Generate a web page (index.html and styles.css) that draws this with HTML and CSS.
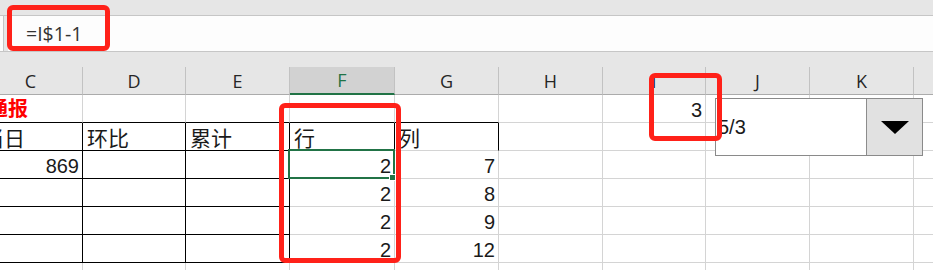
FILE: index.html
```html
<!DOCTYPE html>
<html lang="zh-CN">
<head>
  <meta charset="UTF-8">
  <title>Sheet</title>
  <link rel="stylesheet" href="styles.css">
</head>
<body>
  <div class="ribbon-edge"></div>

  <div class="formula-bar">
    <div class="name-box"></div>
    <div class="formula-input">=I$1-1</div>
  </div>

  <div class="sheet" id="sheet">
    <div class="selection"><span class="fill-handle"></span></div>
  </div>

  <div class="combo">
    <div class="combo-text"><span>5/3</span></div>
    <div class="combo-btn"><span class="arrow"></span></div>
  </div>

  <div class="mark mark-formula"></div>
  <div class="mark mark-cell"></div>
  <div class="mark mark-column"></div>

  <script>
    const cols = ['C', 'D', 'E', 'F', 'G', 'H', 'I', 'J', 'K', 'L'];

    // row number -> { column: [text, class] }
    const data = {
      1: { C: ['通报', 'zh title'], I: ['3', 'num'] },
      2: { C: ['当日', 'zh'], D: ['环比', 'zh'], E: ['累计', 'zh'], F: ['行', 'zh'], G: ['列', 'zh'] },
      3: { C: ['869', 'num'], F: ['2', 'num'], G: ['7', 'num'] },
      4: { F: ['2', 'num'], G: ['8', 'num'] },
      5: { F: ['2', 'num'], G: ['9', 'num'] },
      6: { F: ['2', 'num'], G: ['12', 'num'] },
      7: {}
    };

    const sheet = document.getElementById('sheet');
    const selection = sheet.querySelector('.selection');

    function blackRight(r, c) {
      if (r >= 2 && r <= 6 && ['C', 'D', 'E'].includes(c)) return true;
      if (r === 2 && ['F', 'G'].includes(c)) return true;
      return false;
    }

    function blackBottom(r, c) {
      if (r === 1 && ['C', 'D', 'E', 'F', 'G'].includes(c)) return true;
      if (r >= 2 && r <= 6 && ['C', 'D', 'E'].includes(c)) return true;
      return false;
    }

    cols.forEach(c => {
      const head = document.createElement('div');
      head.className = 'col-head' + (c === 'F' ? ' active' : '');
      head.textContent = c === 'L' ? '' : c;
      sheet.insertBefore(head, selection);
    });

    Object.keys(data).forEach(key => {
      const r = Number(key);
      cols.forEach(c => {
        const cell = document.createElement('div');
        const entry = data[r][c];
        cell.className = 'cell';
        if (entry) {
          cell.className += ' ' + entry[1];
          const span = document.createElement('span');
          span.textContent = entry[0];
          cell.appendChild(span);
        }
        if (blackRight(r, c)) cell.classList.add('br');
        if (blackBottom(r, c)) cell.classList.add('bb');
        sheet.insertBefore(cell, selection);
      });
    });
  </script>
</body>
</html>
```

FILE: styles.css
```css
* {
  box-sizing: border-box;
}
body {
  margin: 0;
  width: 933px;
  height: 270px;
  overflow: hidden;
  position: relative;
  background: #e6e6e6;
  font-family: "Liberation Sans", "Noto Sans CJK SC", sans-serif;
  color: #1a1a1a;
}

.ribbon-edge {
  height: 15px;
}
.formula-bar {
  display: flex;
  height: 37px;
  border-top: 1px solid #c6c6c6;
  border-bottom: 1px solid #c6c6c6;
  background: #e6e6e6;
}
.name-box {
  width: 4px;
  background: #fdfdfd;
  border-right: 1px solid #c6c6c6;
}
.formula-input {
  flex: 1;
  margin-left: 4px;
  padding-left: 18px;
  background: #fdfdfd;
  font-family: "Open Sans", sans-serif;
  font-size: 19.5px;
  line-height: 35px;
  color: #333;
}

.sheet {
  position: relative;
  margin-top: 15px;
  margin-left: -21px;
  width: 954px;
  overflow: hidden;
  display: grid;
  grid-template-columns: 104px 103px 104px 105px 104px 104px 103px 104px 104px 104px;
  grid-auto-rows: 28px;
  background: #fff;
}
.col-head {
  display: flex;
  align-items: center;
  justify-content: center;
  background: #e6e6e6;
  border-right: 1px solid #c2c2c2;
  border-bottom: 1px solid #ababab;
  font-family: "Open Sans", sans-serif;
  font-size: 18px;
  color: #262626;
}
.col-head.active {
  background: #d2d2d2;
  color: #217346;
  border-bottom: 2px solid #217346;
}

.cell {
  display: flex;
  align-items: flex-end;
  padding: 0 3px;
  border-right: 1px solid #d4d4d4;
  border-bottom: 1px solid #d4d4d4;
  font-size: 20px;
  line-height: 22px;
  white-space: nowrap;
  background: #fff;
}
.cell.num {
  justify-content: flex-end;
  padding-bottom: 1px;
}
.cell.zh {
  font-family: "Noto Sans CJK SC", sans-serif;
  font-size: 21px;
  padding-left: 4px;
  padding-bottom: 2px;
}
.cell.title {
  color: #ff0000;
  font-weight: bold;
  font-size: 20px;
  padding-left: 9px;
  padding-bottom: 3px;
}
.cell.br {
  border-right-color: #000;
}
.cell.bb {
  border-bottom-color: #000;
}

.selection {
  position: absolute;
  left: 309px;
  top: 82px;
  width: 107px;
  height: 30px;
  border: 2px solid #217346;
}
.fill-handle {
  position: absolute;
  right: -3px;
  bottom: -4px;
  width: 7px;
  height: 7px;
  background: #217346;
  border: 1px solid #fff;
}

.combo {
  position: absolute;
  left: 715px;
  top: 98px;
  width: 208px;
  height: 58px;
  display: flex;
  background: #fff;
  border: 1px solid #8a8a8a;
}
.combo-text {
  flex: 1;
  margin-left: 5px;
  overflow: hidden;
  display: flex;
  align-items: center;
  font-size: 20px;
  color: #1a1a1a;
}
.combo-text span {
  margin-left: -3px;
}
.combo-btn {
  width: 56px;
  display: flex;
  align-items: center;
  justify-content: center;
  background: #e1e1e1;
  border-left: 1px solid #8c8c8c;
}
.arrow {
  width: 0;
  height: 0;
  border-left: 14px solid transparent;
  border-right: 14px solid transparent;
  border-top: 13px solid #000;
}

.mark {
  position: absolute;
  border: 5px solid #ff2119;
  border-radius: 6px;
}
.mark-formula {
  left: 7px;
  top: 5px;
  width: 103px;
  height: 46px;
}
.mark-cell {
  left: 649px;
  top: 73px;
  width: 73px;
  height: 68px;
}
.mark-column {
  left: 279px;
  top: 103px;
  width: 122px;
  height: 160px;
}
```
